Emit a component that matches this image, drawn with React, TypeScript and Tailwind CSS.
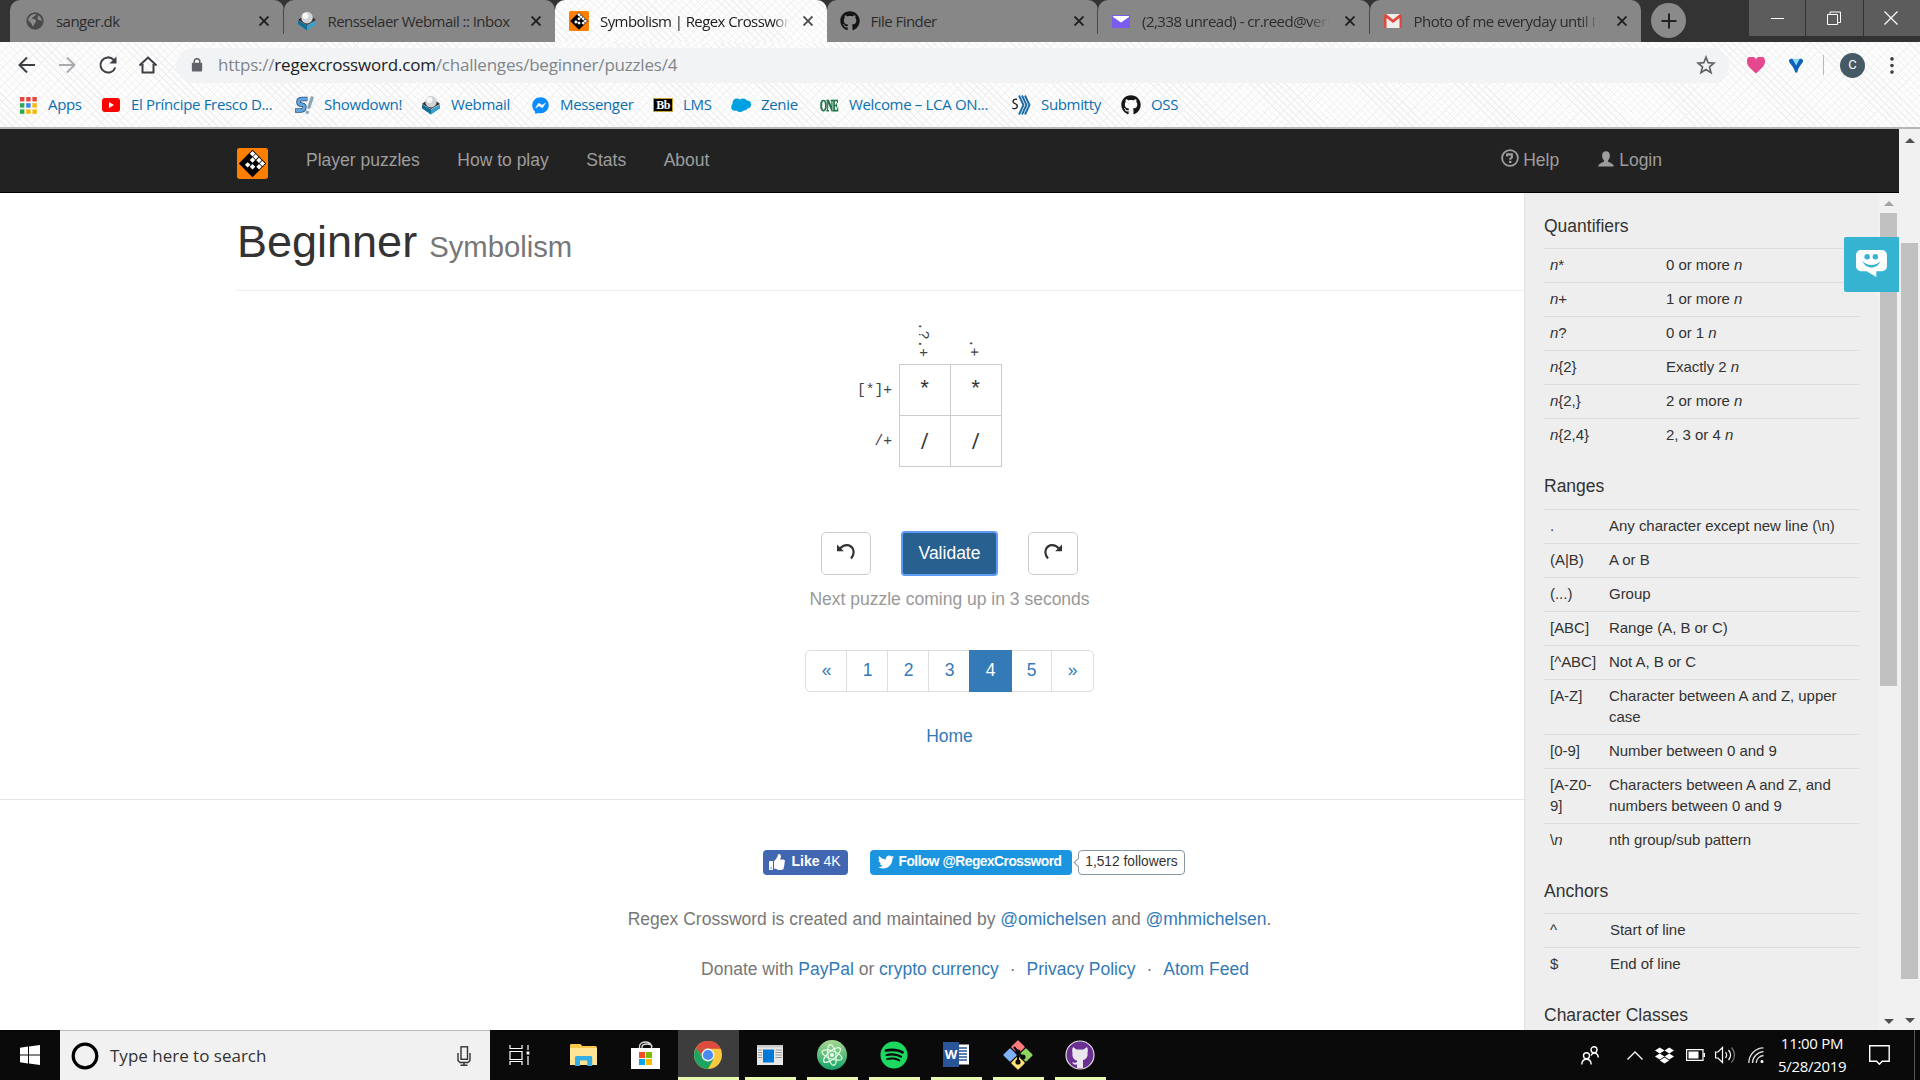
import React from "react";
import { FaGithub, FaSpotify, FaDropbox, FaTwitter, FaFacebookMessenger, FaThumbsUp } from "react-icons/fa";

const HATCH =
  "bg-[#fdfdfd] bg-[repeating-linear-gradient(45deg,transparent_0_4px,#f0f0f0_4px_5px),repeating-linear-gradient(-45deg,transparent_0_5px,#f4f4f4_5px_6px)]";

function Globe() {
  return (
    <svg viewBox="0 0 20 20" className="size-[18px]">
      <circle cx="10" cy="10" r="9.6" fill="#4a4a4a" />
      <path d="M10 2.2c2 .2 1 2-.8 2.300-.4 1.500-2.700 1-2.500 3 2-.4 4.300.6 4.600 2.300.3 1.300-1.800 2.400-2.200 4.200-.3 1.600-1.300 2.600-2 1.300C6.500 13 4.600 11 2.400 9.500 2.600 5.500 6 2.300 10 2.200z" fill="#8a8a8a" />
      <path d="M13 3.500c2.600 1 4.600 3.600 4.700 6.500-1.200-1.200-3.600-.6-4.600-1.800-.9-1.200.5-2-.1-4.700z" fill="#8a8a8a" />
    </svg>
  );
}

function Roundcube() {
  return (
    <svg viewBox="0 0 20 20" className="size-[20px]">
      <path d="M1 9 L6 5 H14 L19 9 L10 14z" fill="#333" />
      <circle cx="10" cy="6.600" r="5.800" fill="#cfd3d6" />
      <circle cx="8.500" cy="5" r="3" fill="#f6f7f8" />
      <path d="M1 9.500 L10 14.500 L19 9.500 V13.500 L10 19.500 L1 13.500z" fill="#3aa0c9" />
      <path d="M1 13 L10 19.500 V14.500 L1 9.500z" fill="#156c97" />
    </svg>
  );
}

function RegexLogo({ className }: { className: string }) {
  return (
    <svg viewBox="0 0 32 32" className={className}>
      <rect width="32" height="32" rx="2.500" fill="#ff8000" />
      <g transform="translate(16 16) rotate(45)">
        <rect x="-10" y="-10" width="20" height="20" fill="#000" />
        <g fill="#fff">
          <rect x="-9.200" y="-9.200" width="4" height="4" />
          <rect x="-4.500" y="-9.200" width="4" height="4" />
          <rect x=".3" y="-9.200" width="4" height="4" />
          <rect x="5.100" y="-9.200" width="4" height="4" />
          <rect x="5.100" y="-4.500" width="4" height="4" />
          <rect x="-4.500" y="-4.500" width="4" height="4" />
          <rect x=".3" y=".3" width="4" height="4" />
          <rect x="-4.500" y="2.500" width="4" height="4" />
        </g>
      </g>
    </svg>
  );
}

function YahooMail() {
  return (
    <svg viewBox="0 0 18 13" className="h-[13px] w-[18px]">
      <rect width="18" height="13" rx="1" fill="#7a5cf0" />
      <path d="M1 1h16v1L9 7.500 1 2z" fill="#fff" />
    </svg>
  );
}

function Gmail() {
  return (
    <svg viewBox="0 0 18 14" className="h-[14px] w-[18px]">
      <rect width="18" height="14" rx="1.200" fill="#eee" />
      <path d="M0 1.200C0 .5.500 0 1.200 0H2l7 5.500L16 0h.8c.7 0 1.200.5 1.200 1.200V13c0 .6-.4 1-1 1h-1.500V4L9 9 2.500 4v10H1c-.6 0-1-.4-1-1z" fill="#dd4b3e" />
    </svg>
  );
}

function Close({ dark = true }: { dark?: boolean }) {
  return (
    <svg viewBox="0 0 10 10" className="size-[10px] shrink-0">
      <path d="M.5.5l9 9M9.500.5l-9 9" stroke={dark ? "#1f1f1f" : "#4a4d50"} strokeWidth="1.900" />
    </svg>
  );
}

const TABS = [
  { icon: <Globe />, title: "sanger.dk" },
  { icon: <Roundcube />, title: "Rensselaer Webmail :: Inbox" },
  { icon: <RegexLogo className="size-5" />, title: "Symbolism | Regex Crossword", active: true },
  { icon: <FaGithub className="size-5 text-[#151515]" />, title: "File Finder" },
  { icon: <YahooMail />, title: "(2,338 unread) - cr.reed@veri" },
  { icon: <Gmail />, title: "Photo of me everyday until I d" },
];

function TabStrip() {
  return (
    <div className="flex h-[42px] shrink-0 bg-[#333]">
      <div className="flex pl-[10px]">
        {TABS.map((t, i) => (
          <div
            key={i}
            className={
              t.active
                ? `flex h-[42px] w-[271.500px] items-center rounded-t-[10px] pl-[14px] ${HATCH}`
                : i === 0
                  ? "flex h-[42px] w-[273.500px] items-center rounded-t-[10px] bg-[#878787] pl-[15px]"
                  : "flex h-[42px] w-[271.500px] items-center rounded-t-[10px] bg-[#878787] pl-[13px]"
            }
          >
            <div className="flex w-5 justify-center">{t.icon}</div>
            <div
              className={
                t.active
                  ? "ml-[11px] w-[189px] overflow-hidden whitespace-nowrap text-[15px] tracking-[-0.038em] text-[#202020] [mask-image:linear-gradient(90deg,#000_92%,transparent)]"
                  : i > 3
                    ? "ml-[11px] w-[189px] overflow-hidden whitespace-nowrap text-[15px] tracking-[-0.034em] text-[#2c2c2c] [mask-image:linear-gradient(90deg,#000_88%,transparent_99%)]"
                    : "ml-[11px] w-[189px] overflow-hidden whitespace-nowrap text-[15px] tracking-[-0.036em] text-[#2c2c2c]"
              }
            >
              {t.title}
            </div>
            <div className="ml-[14px] flex flex-1">
              <Close dark={!t.active} />
            </div>
            <div className={i === 0 || i === 3 || i === 4 ? "h-[25px] w-px bg-[#4a4a4a]" : "w-px"} />
          </div>
        ))}
      </div>
      <div className="ml-[10px] mt-[3px] flex size-[35px] items-center justify-center rounded-full bg-[#8a8a8a]">
        <svg viewBox="0 0 16 16" className="size-4">
          <path d="M8 .5v15M.5 8h15" stroke="#222" strokeWidth="2" />
        </svg>
      </div>
      <div className="ml-auto flex h-[36px] gap-px text-white">
        <div className="flex w-[56px] items-center justify-center bg-[#5c5c5c]">
          <div className="h-px w-[13px] bg-white" />
        </div>
        <div className="flex w-[57px] items-center justify-center bg-[#5c5c5c]">
          <svg viewBox="0 0 14 14" className="mr-[2px] size-[14px]" fill="none" stroke="#fff">
            <path d="M.5 3.500h10v10H.5zM3 3.500V1h10.500v10.500H11" />
          </svg>
        </div>
        <div className="flex w-[56px] items-center justify-center bg-[#5c5c5c]">
          <svg viewBox="0 0 14 14" className="mr-[2px] size-[14px]" stroke="#fff" strokeWidth="1.200">
            <path d="M.5.5l13 13M13.500.5l-13 13" />
          </svg>
        </div>
      </div>
    </div>
  );
}

function Toolbar() {
  return (
    <div className="flex h-[46px] items-center pl-[17px]">
      <div className="flex w-[159px] items-center">
        <svg viewBox="0 0 20 20" className="size-5" fill="none" stroke="#3c3f43" strokeWidth="2">
          <path d="M18 10H3M10 2.500L2.500 10l7.500 7.500" />
        </svg>
        <svg viewBox="0 0 20 20" className="ml-5 size-5" fill="none" stroke="#a9abae" strokeWidth="2">
          <path d="M2 10h15M10 2.500l7.500 7.500-7.500 7.500" />
        </svg>
        <svg viewBox="0 0 20 20" className="ml-[21px] size-5" fill="none" stroke="#3c3f43" strokeWidth="2">
          <path d="M17.300 12.500A7.600 7.600 0 1 1 15.500 4.600L17 6.200" />
          <path d="M18.500 1.500v7h-7z" fill="#3c3f43" stroke="none" />
        </svg>
        <svg viewBox="0 0 20 20" className="ml-5 size-5" fill="none" stroke="#3c3f43" strokeWidth="2">
          <path d="M1.500 10.500L10 2.500l8.500 8M4.500 9v8.500h11V9" />
        </svg>
      </div>
      <div className="flex h-[35px] w-[1553px] items-center rounded-full bg-[#f1f3f4] pl-[15px] pr-[13px]">
        <svg viewBox="0 0 12 15" className="h-[14px] w-[12px]">
          <rect x=".5" y="5" width="11" height="9.500" rx="1" fill="#5f6368" />
          <path d="M3 6V3.800a3 3 0 0 1 6 0V6" fill="none" stroke="#5f6368" strokeWidth="1.600" />
        </svg>
        <div className="ml-[15px] text-[17px] tracking-[-0.012em] text-[#80868b]">
          https://<span className="text-[#202124]">regexcrossword.com</span>/challenges/beginner/puzzles/4
        </div>
        <svg viewBox="0 0 20 20" className="ml-auto size-5" fill="none" stroke="#5f6368" strokeWidth="1.700">
          <path d="M10 2.200l2.200 5.500 5.800.4-4.500 3.800 1.500 5.800-5-3.200-5 3.200 1.500-5.800L2 8.100l5.800-.4z" />
        </svg>
      </div>
      <svg viewBox="0 0 20 18" className="ml-[17px] h-[17px] w-5">
        <path d="M10 17.500C4 12 .5 9 .5 5.200A4.800 4.800 0 0 1 10 3a4.800 4.800 0 0 1 9.500 2.200C19.500 9 16 12 10 17.500z" fill="#e5488f" />
      </svg>
      <svg viewBox="0 0 18 18" className="ml-[22px] h-[17px] w-[16px]">
        <path d="M1 3.500C2 .5 6 1 6.500 3l2.500 4 2.500-4c.5-2 4.500-2.500 5.500.5C17 7 11.500 10 10.500 17H8C7 10 1 7 1 3.500z" fill="#0c63b8" />
        <path d="M5 1.500c2.500 0 5.500 0 8 0L9.200 9z" fill="#8fd8fb" />
      </svg>
      <div className="ml-[19px] h-5 w-px bg-[#b9b9b9]" />
      <div className="ml-[16px] flex size-[25px] items-center justify-center rounded-full bg-[#455a64] font-['Roboto'] text-[13px] text-white">C</div>
      <svg viewBox="0 0 4 18" className="ml-[25px] h-[17px] w-1" fill="#3c3f43">
        <circle cx="2" cy="2" r="1.900" />
        <circle cx="2" cy="9" r="1.900" />
        <circle cx="2" cy="16" r="1.900" />
      </svg>
    </div>
  );
}

function AppsIcon() {
  const c = ["#e8453c", "#e8453c", "#e8453c", "#2da94f", "#3b82f0", "#f6b704", "#2da94f", "#f6b704", "#f6b704"];
  return (
    <svg viewBox="0 0 17 17" className="size-[17px]">
      {c.map((f, i) => (
        <rect key={i} x={(i % 3) * 6.2} y={Math.floor(i / 3) * 6.2} width="4.400" height="4.400" fill={f} />
      ))}
    </svg>
  );
}

const BOOKMARKS = [
  { w: "w-[83px]", label: "Apps", icon: <AppsIcon /> },
  {
    w: "w-[193px]",
    label: "El Príncipe Fresco D...",
    icon: (
      <svg viewBox="0 0 18 14" className="h-[14px] w-[18px] shrink-0">
        <rect width="18" height="14" rx="3" fill="#f00" />
        <path d="M7 4l5 3-5 3z" fill="#fff" />
      </svg>
    ),
  },
  {
    w: "w-[127px]",
    label: "Showdown!",
    icon: (
      <svg viewBox="0 0 20 20" className="size-[20px]" fill="none">
        <path d="M13.500 4H8.500c-2.400 0-4 1-4 3s1.500 2.700 3.500 2.800 2.700 1 2.300 3-2 2.700-4 2.700H1" stroke="#2b4d78" strokeWidth="4.600" />
        <path d="M13 4H8.500c-2.400 0-4 1-4 3s1.500 2.700 3.500 2.800 2.700 1 2.300 3-2 2.700-4 2.700H1.500" stroke="#62a5dc" strokeWidth="3" />
        <path d="M18.500 1.500l-4 12M13.600 16l-.8 2.800" stroke="#8aa6bd" strokeWidth="3.200" />
      </svg>
    ),
  },
  { w: "w-[109px]", label: "Webmail", icon: <Roundcube /> },
  { w: "w-[123px]", label: "Messenger", icon: <FaFacebookMessenger className="size-[17px] text-[#0a8dff]" /> },
  {
    w: "w-[78px]",
    label: "LMS",
    icon: (
      <div className="flex h-[14px] w-5 items-center justify-center border border-[#c9a23a] bg-black font-['Liberation_Serif'] text-[12px] font-bold leading-none tracking-tighter text-white">
        Bb
      </div>
    ),
  },
  {
    w: "w-[88px]",
    label: "Zenie",
    icon: (
      <svg viewBox="0 0 20 14" className="h-[14px] w-5 shrink-0" fill="#00a1e0">
        <circle cx="6" cy="5" r="4.500" />
        <circle cx="12" cy="4.500" r="4" />
        <circle cx="16" cy="6.500" r="4" />
        <circle cx="4" cy="9" r="3.800" />
        <circle cx="9" cy="10" r="4" />
        <circle cx="13" cy="9" r="3.500" />
      </svg>
    ),
  },
  {
    w: "w-[192px]",
    label: "Welcome – LCA ON...",
    icon: (
      <div className="origin-center scale-x-[0.700] scale-y-125 whitespace-nowrap font-['Liberation_Serif'] text-[13px] font-bold leading-none tracking-[-0.060em] text-[#1d7145] [-webkit-text-stroke:0.600px_#1d7145]">
        ONE
      </div>
    ),
  },
  {
    w: "w-[110px]",
    label: "Submitty",
    icon: (
      <svg viewBox="0 0 20 20" className="size-5" fill="none">
        <path d="M6 4.500C4 3.500 1.500 5 2.300 7.200c.7 1.600 3.700 1.300 4 3.600.3 2.600-3 3.600-5 2.200" stroke="#222" strokeWidth="1.400" />
        <path d="M8 .5L12.500 10 8 19.500M11 .5L15.500 10 11 19.500M14 .5L18.500 10 14 19.500" stroke="#1b6ba5" strokeWidth="1.900" />
      </svg>
    ),
  },
  { w: "w-[80px]", label: "OSS", icon: <FaGithub className="size-5 text-[#151515]" /> },
];

function Bookmarks() {
  return (
    <div className="flex h-[34px] items-center pl-[18px]">
      {BOOKMARKS.map((b) => (
        <div key={b.label} className={`flex items-center ${b.w}`}>
          <div className="flex w-5 shrink-0 items-center justify-center">{b.icon}</div>
          <div className="mb-[2px] ml-[10px] whitespace-nowrap text-[15px] tracking-[-0.022em] text-[#0b6fb3]">{b.label}</div>
        </div>
      ))}
    </div>
  );
}

function Navbar() {
  return (
    <div className="flex h-[64px] shrink-0 items-start border-b border-black bg-[#222] pl-[237px] text-[17.500px] leading-[25px] text-[#9d9d9d]">
      <RegexLogo className="mt-[19px] size-[31px]" />
      <div className="mt-[19px] flex gap-[37.500px] pl-[38px]">
        <span>Player puzzles</span>
        <span>How to play</span>
        <span>Stats</span>
        <span>About</span>
      </div>
      <div className="ml-auto mr-[237px] mt-[19px] flex">
        <svg viewBox="0 0 18 18" className="mr-[4px] mt-px size-[18px]" fill="none">
          <circle cx="9" cy="9" r="7.900" stroke="#9d9d9d" strokeWidth="1.800" />
          <path d="M6.200 7.500V5.300h4.600v3.200L9.300 9.700v1" stroke="#9d9d9d" strokeWidth="2.200" />
          <rect x="8" y="11.800" width="2.400" height="2.200" fill="#9d9d9d" />
        </svg>
        <span>Help</span>
        <svg viewBox="0 0 16 16" className="ml-[39px] mr-[5px] mt-[3px] size-[16px]" fill="#9d9d9d">
          <path d="M8 .3c2.500 0 3.900 1.700 3.900 4.200 0 2-.7 3.800-1.800 4.800v1.200c0 .9 5.700 1.700 5.700 5H.2c0-3.300 5.700-4.100 5.700-5V9.300C4.800 8.300 4.100 6.500 4.100 4.500 4.100 2 5.500.3 8 .3z" />
        </svg>
        <span>Login</span>
      </div>
    </div>
  );
}

function HistoryIcon({ flip = false }: { flip?: boolean }) {
  return (
    <svg viewBox="0 0 20 17" className={flip ? "h-[17px] w-5 -scale-x-100" : "h-[17px] w-5"} fill="none">
      <path d="M4 5.500C8 .8 14.500 1 17 6c1.200 3.500.3 7-2 9.500" stroke="#333" strokeWidth="2.200" />
      <path d="M1 1.500v6.700h6.800z" fill="#333" />
    </svg>
  );
}

const GRID = ["*", "*", "/", "/"];

function Puzzle() {
  return (
    <div className="flex flex-col items-center">
      <div className="flex font-['Liberation_Mono'] text-[#333]">
        <div className="mr-[7px] mt-[44px] w-[42px] text-right text-[14.600px] text-[#444]">
          <div className="flex h-[51px] items-center justify-end pt-[2px]">[*]+</div>
          <div className="flex h-[51px] items-center justify-end pt-[2px]">/+</div>
        </div>
        <div>
          <div className="flex h-[44px] text-[14.600px] text-[#444]">
            {[".?.+", ".+"].map((c) => (
              <div key={c} className="flex w-[51px] items-center justify-end pb-[7px] pr-[4px] [writing-mode:vertical-rl]">
                <span className="leading-[18px]">{c}</span>
              </div>
            ))}
          </div>
          <div className="grid w-[103px] grid-cols-[51px_51px] border-l border-t border-[#ccc]">
            {GRID.map((c, i) => (
              <div
                key={i}
                className={
                  c === "/"
                    ? "flex h-[51px] items-center justify-center border-b border-r border-[#ccc] pr-px font-['Open_Sans'] text-[21px] leading-none"
                    : "flex h-[51px] items-center justify-center border-b border-r border-[#ccc] pr-px pt-[2px] text-[22px] leading-none"
                }
              >
                {c}
              </div>
            ))}
          </div>
        </div>
        <div className="w-[47px]" />
      </div>
      <div className="mt-[64px] flex items-center">
        <div className="flex h-[43px] w-[50px] justify-center rounded-[5px] border border-[#ccc] pt-[10px]">
          <HistoryIcon />
        </div>
        <div className="mx-[30px] flex h-[45px] w-[97px] items-center justify-center rounded-[4px] border-2 border-[#5e9bf2] bg-[#286090] text-[17.500px] text-white">
          Validate
        </div>
        <div className="flex h-[43px] w-[50px] justify-center rounded-[5px] border border-[#ccc] pt-[10px]">
          <HistoryIcon flip />
        </div>
      </div>
      <div className="mt-[11px] text-[17.500px] leading-[25px] text-[#999]">Next puzzle coming up in 3 seconds</div>
      <div className="mt-[38px] flex h-[42px] rounded-[5px] border border-[#ddd] text-[17.500px] text-[#337ab7]">
        {["«", "1", "2", "3", "4", "5", "»"].map((p) => (
          <div
            key={p}
            className={
              p === "4"
                ? "-my-px flex w-[43px] items-center justify-center bg-[#337ab7] pb-[2px] text-white"
                : p === "3"
                  ? "flex w-[40px] items-center justify-center pb-[2px] pl-px"
                  : p === "»"
                    ? "flex w-[41px] items-center justify-center pb-[2px]"
                    : p === "5"
                      ? "flex w-[40px] items-center justify-center border-r border-[#ddd] pb-[2px]"
                      : "flex w-[41px] items-center justify-center border-r border-[#ddd] pb-[2px] pl-px"
            }
          >
            {p}
          </div>
        ))}
      </div>
      <div className="mt-[32px] text-[17.500px] leading-[25px] text-[#337ab7]">Home</div>
    </div>
  );
}

function Footer() {
  return (
    <div className="flex w-[1899px] flex-col items-center text-[17.500px] leading-[25px] text-[#777]">
      <div className="ml-[48px] mt-[50px] flex h-[25px] items-stretch text-[14px] text-white">
        <div className="flex w-[85px] items-center rounded-[4px] bg-[#4267b2] pb-[2px] pl-[6px] text-[14px]">
          <FaThumbsUp className="size-[16px]" />
          <b className="ml-[7px]">Like</b>
          <span className="ml-[4px]">4K</span>
        </div>
        <div className="ml-[22px] flex w-[202px] items-center whitespace-nowrap rounded-[4px] bg-[#1b95e0] pb-[2px] pl-[8px] text-[13.750px]">
          <FaTwitter className="mr-[5px] size-[16px]" />
          <span className="font-bold tracking-[-0.036em]">Follow @RegexCrossword</span>
        </div>
        <div className="relative ml-[6px] flex w-[107px] items-center justify-center rounded-[4px] border border-[#8799a6] pb-[2px] pl-px text-[13.750px] text-[#333]">
          1,512 followers
          <div className="absolute -left-[4px] top-[8px] size-[7px] rotate-45 border-b border-l border-[#8799a6] bg-white" />
        </div>
      </div>
      <div className="mt-[32px]">
        Regex Crossword is created and maintained by <span className="text-[#337ab7]">@omichelsen</span> and{" "}
        <span className="text-[#337ab7]">@mhmichelsen</span>.
      </div>
      <div className="ml-[51px] mt-[25px]">
        Donate with <span className="text-[#337ab7]">PayPal</span> or <span className="text-[#337ab7]">crypto currency</span>
        <span className="mx-[11px]">·</span>
        <span className="text-[#337ab7]">Privacy Policy</span>
        <span className="mx-[11px]">·</span>
        <span className="text-[#337ab7]">Atom Feed</span>
      </div>
    </div>
  );
}

const N = <i>n</i>;

type Row = [React.ReactNode, React.ReactNode];
const QUANT: Row[] = [
  [<>{N}*</>, <>0 or more {N}</>],
  [<>{N}+</>, <>1 or more {N}</>],
  [<>{N}?</>, <>0 or 1 {N}</>],
  [<>{N}{"{2}"}</>, <>Exactly 2 {N}</>],
  [<>{N}{"{2,}"}</>, <>2 or more {N}</>],
  [<>{N}{"{2,4}"}</>, <>2, 3 or 4 {N}</>],
];
const RANGES: Row[] = [
  [".", "Any character except new line (\\n)"],
  ["(A|B)", "A or B"],
  ["(...)", "Group"],
  ["[ABC]", "Range (A, B or C)"],
  ["[^ABC]", "Not A, B or C"],
  ["[A-Z]", <>Character between A and Z, upper<br />case</>],
  ["[0-9]", "Number between 0 and 9"],
  [<>[A-Z0-<br />9]</>, <>Characters between A and Z, and<br />numbers between 0 and 9</>],
  [<>\{N}</>, "nth group/sub pattern"],
];
const ANCHORS: Row[] = [
  ["^", "Start of line"],
  ["$", "End of line"],
];

function Table({ rows, col }: { rows: Row[]; col: string }) {
  return (
    <div className="w-[315px] text-[15px] leading-[21px] tracking-[-0.002em]">
      {rows.map((r, i) => (
        <div key={i} className="flex border-t border-[#ddd] pb-[7px] pl-[6px] pt-[5px]">
          <div className={`shrink-0 ${col}`}>{r[0]}</div>
          <div className="whitespace-nowrap">{r[1]}</div>
        </div>
      ))}
    </div>
  );
}

function Arrow({ down = false, color = "#505050" }: { down?: boolean; color?: string }) {
  return (
    <svg viewBox="0 0 10 5" className={down ? "h-[5px] w-[10px] rotate-180" : "h-[5px] w-[10px]"}>
      <path d="M5 0l5 5H0z" fill={color} />
    </svg>
  );
}

function Sidebar() {
  return (
    <div className="relative flex h-[837px] w-[375px] shrink-0 overflow-hidden border-l border-[#e0e0e0] bg-[#eee] text-[#333]">
      <div className="w-[353px] shrink-0 pl-[19px] text-[17.500px] leading-[20px]">
        <div className="mb-[12px] mt-[23px]">Quantifiers</div>
        <Table rows={QUANT} col="w-[116px]" />
        <div className="mb-[13px] mt-[24px]">Ranges</div>
        <Table rows={RANGES} col="w-[59px]" />
        <div className="mb-[12px] mt-[24px]">Anchors</div>
        <Table rows={ANCHORS} col="w-[60px]" />
        <div className="mt-[24px]">Character Classes</div>
      </div>
      <div className="flex w-[21px] flex-col items-center bg-[#f1f1f1]">
        <div className="flex h-[20px] items-center">
          <Arrow color="#a3a3a3" />
        </div>
        <div className="h-[473px] w-[17px] bg-[#c1c1c1]" />
        <div className="mb-[6px] mt-auto">
          <Arrow down />
        </div>
      </div>
      <div className="absolute right-0 top-[44px] flex size-[55px] justify-center rounded-l-[2px] bg-[#37b3d2] pt-[13px]">
        <svg viewBox="0 0 32 28" className="h-[27px] w-[31px]">
          <path d="M5 0h22a5 5 0 0 1 5 5v12a5 5 0 0 1-5 5h-6v6l-10-6H5a5 5 0 0 1-5-5V5a5 5 0 0 1 5-5z" fill="#fff" />
          <circle cx="11.500" cy="7" r="2.900" fill="#37b3d2" />
          <circle cx="20" cy="7" r="2.900" fill="#37b3d2" />
          <path d="M6.500 11.500c5 5.500 14 5.500 19 0-3.500 9-15.500 9-19 0z" fill="#37b3d2" />
        </svg>
      </div>
    </div>
  );
}

function Chrome() {
  return (
    <svg viewBox="-14 -14 28 28" className="size-[28px]">
      <circle r="14" fill="#fbc940" />
      <path d="M-12.100-7A14 14 0 0 0 0 14L5.500 4-5.500 4z" fill="#1da462" />
      <path d="M-12.100-7A14 14 0 0 1 12.700-6.200H0z" fill="#dd4b3e" />
      <path d="M-12.100-7L-5.500 4 0-6.200z" fill="#1da462" />
      <path d="M-12.100-7L-6 0 0-6.200z" fill="#dd4b3e" />
      <circle r="6.400" fill="#f2f2f2" />
      <circle r="5.100" fill="#4a8af4" />
    </svg>
  );
}

const TASKS = [
  { icon: <Chrome /> },
  {
    icon: (
      <svg viewBox="0 0 26 20" className="h-[20px] w-[26px]">
        <rect width="26" height="20" fill="#e8e8e8" />
        <rect width="26" height="2.500" fill="#c9c9c9" />
        <rect x="6" y="4.500" width="11" height="13" fill="#0078d7" />
        <path d="M1 5h4M1 7.500h4M1 10h4M1 12.500h4M18.500 5H25M18.500 7.500H25M18.500 10H25M18.500 12.500H25" stroke="#999" />
      </svg>
    ),
  },
  {
    icon: (
      <svg viewBox="-15 -15 30 30" className="size-[30px]" fill="none" stroke="#e8fbe8" strokeWidth="1.200">
        <defs>
          <linearGradient id="atomFill" x1="0" y1="0" x2="0" y2="1">
            <stop offset="0" stopColor="#a9d890" />
            <stop offset="1" stopColor="#12a36a" />
          </linearGradient>
        </defs>
        <circle r="15" fill="url(#atomFill)" stroke="none" />
        <ellipse rx="10.500" ry="4" transform="rotate(20)" />
        <ellipse rx="10.500" ry="4" transform="rotate(80)" />
        <ellipse rx="10.500" ry="4" transform="rotate(140)" />
        <circle r="1.500" fill="#fff" />
      </svg>
    ),
  },
  {
    icon: <FaSpotify className="size-[28px] text-[#1ed760]" />,
  },
  {
    icon: (
      <div className="flex items-center">
        <div className="z-10 flex h-[25px] w-[16px] items-center justify-center bg-[#2a5699] text-[13px] font-bold text-white">W</div>
        <svg viewBox="0 0 10 20" className="h-[21px] w-[10px]">
          <rect width="10" height="20" fill="#fff" />
          <path d="M0 3.500h8M0 6.500h8M0 9.500h8M0 12.500h8M0 15.500h8" stroke="#2a5699" strokeWidth="1.300" />
        </svg>
      </div>
    ),
  },
  {
    icon: (
      <svg viewBox="-15 -15 30 30" className="size-[30px]">
        <g transform="rotate(45)">
          <rect x="-10.600" y="-10.600" width="10" height="10" rx="1" fill="#ff7b7b" />
          <rect x=".6" y="-10.600" width="10" height="10" rx="1" fill="#8fd45e" />
          <rect x="-10.600" y=".6" width="10" height="10" rx="1" fill="#7fb0f8" />
          <rect x=".6" y=".6" width="10" height="10" rx="1" fill="#ffe27a" />
        </g>
        <path d="M-4-8L0-3v11M0-2l5 4" stroke="#0a0a0a" strokeWidth="2.200" fill="none" />
        <circle cy="-3" r="2.600" fill="#0a0a0a" />
        <circle cy="7" r="2.600" fill="#0a0a0a" />
        <circle cx="5" cy="2" r="2.600" fill="#0a0a0a" />
      </svg>
    ),
  },
  {
    icon: (
      <svg viewBox="-15 -15 30 30" className="size-[30px]">
        <circle r="14" fill="#6b2f92" stroke="#ddd" strokeWidth="1.200" />
        <path d="M-7-8l3.500 2.500h7L7-8c1 2 1 4 .5 6 .6 4-1.500 6.500-4.500 7V13h-6V9.500c-3 .5-4-.5-5-2.500 2 1 3 1.200 5 0v-1.500C-6 5-8.200 2-7.500-2-8-4-8-6-7-8z" fill="#e9e6ee" />
      </svg>
    ),
  },
];

function Taskbar() {
  return (
    <div className="flex h-[50px] shrink-0 items-center bg-[#0a0a0a] text-white">
      <div className="flex w-[60px] justify-center">
        <svg viewBox="0 0 20 20" className="size-5" fill="#fff">
          <path d="M0 2.800L8 1.600V9.500H0zM9 1.500L20 0V9.500H9zM0 10.500h8v8L0 17.300zM9 10.500h11V20L9 18.500z" />
        </svg>
      </div>
      <div className="flex h-[50px] w-[430px] items-center border-t border-[#bbb] bg-[#f1f1f1] pl-[11px]">
        <svg viewBox="0 0 28 28" className="size-[28px]" fill="none">
          <circle cx="14" cy="14" r="11.800" stroke="#000" strokeWidth="3.200" />
        </svg>
        <div className="ml-[11px] text-[17px] text-[#333]">Type here to search</div>
        <svg viewBox="0 0 14 20" className="ml-auto mr-[19px] h-[20px] w-[14px]" fill="none" stroke="#333" strokeWidth="1.400">
          <rect x="4" y=".8" width="6.500" height="12.500" />
          <path d="M1 7v7.500l2 2h8l2-2V7M7 16.500v3M3.500 19.300h7" />
        </svg>
      </div>
      <svg viewBox="0 0 21 20" className="ml-[19px] h-[20px] w-[21px]" fill="none" stroke="#fff" strokeWidth="1.200">
        <path d="M1 0v3.500h12V0M1 6.500h12v8H1zM1 20v-3.500h12V20M19 0v5M19 11v9" />
        <rect x="17.600" y="6.500" width="2.800" height="3" fill="#fff" stroke="none" />
      </svg>
      <svg viewBox="0 0 27 22" className="ml-[40px] h-[22px] w-[27px]">
        <path d="M0 1.500C0 .7.500 0 1.300 0h9l2 2H25.500c.8 0 1.300.6 1.300 1.300V21H0z" fill="#f7c64a" />
        <path d="M0 4h27v17H0z" fill="#ffe495" />
        <path d="M5 22v-8.500c0-1 .7-1.600 1.600-1.600h14c.9 0 1.600.6 1.600 1.600V22h-5v-5.500H10V22z" fill="#37aee3" />
      </svg>
      <svg viewBox="0 0 29 28" className="ml-[34px] h-[28px] w-[29px]">
        <path d="M8.500 9V5.500c0-6 12-6 12 0V9M11 9V6c0-4 10-4 10 0" fill="none" stroke="#ddd" strokeWidth="1.300" />
        <path d="M0 7h29v21H0z" fill="#fff" />
        <path d="M8 11h6v6H8z" fill="#f25022" />
        <path d="M15 11h6v6h-6z" fill="#7fba00" />
        <path d="M8 18h6v6H8z" fill="#00a4ef" />
        <path d="M15 18h6v6h-6z" fill="#ffb900" />
      </svg>
      <div className="ml-[18px] flex">
        {TASKS.map((t, i) => (
          <div
            key={i}
            className={
              i === 0
                ? "mr-[6px] flex h-[50px] w-[61px] flex-col items-center justify-between bg-[#3d3d3d]"
                : "mr-[11px] flex h-[50px] w-[51px] flex-col items-center justify-between"
            }
          >
            <div className="flex w-full flex-1 items-center justify-center pr-px pt-[2px]">{t.icon}</div>
            <div className="h-[3px] w-full shrink-0 bg-[#e9f8b0]" />
          </div>
        ))}
      </div>
      <div className="ml-auto flex items-center">
        <svg viewBox="0 0 18 19" className="h-[19px] w-[18px]" fill="none" stroke="#fff" strokeWidth="1.400">
          <circle cx="13" cy="3.800" r="3" />
          <circle cx="5.500" cy="9.800" r="3" />
          <path d="M.8 18.500c.3-7 9.100-7 9.400 0M10 9.500c2-4 7-3 7.300 2" />
        </svg>
        <svg viewBox="0 0 16 9" className="ml-[28px] h-[9px] w-4" fill="none" stroke="#fff" strokeWidth="1.300">
          <path d="M.5 8.500L8 1l7.500 7.500" />
        </svg>
        <FaDropbox className="ml-[12px] size-[19px]" />
        <svg viewBox="0 0 19 12" className="ml-[12px] h-[12px] w-[19px]" fill="none" stroke="#fff" strokeWidth="1.200">
          <path d="M.6.6h16.400v10.800H.6zM18.400 4v4" />
          <rect x="2.500" y="2.500" width="10" height="7" fill="#fff" stroke="none" />
        </svg>
        <svg viewBox="0 0 21 18" className="ml-[10px] h-[18px] w-[21px]" fill="none" stroke="#fff" strokeWidth="1.200">
          <path d="M.6 6v6H3l4.500 4.500v-15L3 6z" />
          <path d="M10.500 6c1.500 2 1.500 4 0 6M13.500 4c2.500 3 2.500 7 0 10" />
          <path d="M16.500 1.500c4 4.500 4 10.500 0 15" stroke="#777" />
        </svg>
        <svg viewBox="0 0 16 16" className="ml-[12px] h-[16px] w-[16px]" fill="none" stroke="#ddd" strokeWidth="1.300">
          <path d="M.8 16C.8 8 7 1 15.500.8M4.500 16c0-6 5-11 11-11.300M8.200 16c0-4 3.300-7.200 7.300-7.500" />
          <circle cx="14" cy="14.500" r="1.500" fill="#fff" stroke="none" />
        </svg>
        <div className="ml-[14px] w-[68px] text-center text-[15px] leading-[23px] tracking-[-0.020em]">
          <div>11:00 PM</div>
          <div>5/28/2019</div>
        </div>
        <svg viewBox="0 0 21 20" className="ml-[23px] h-[20px] w-[21px]" fill="none" stroke="#fff" strokeWidth="1.400">
          <path d="M.7.700h19.500v15.500h-7l-2.800 3-2.800-3H.7z" />
        </svg>
        <div className="ml-[24px] mr-[5px] h-[50px] w-px bg-[#555]" />
      </div>
    </div>
  );
}

export default function App() {
  return (
    <div className="flex h-[1080px] w-[1920px] flex-col overflow-hidden bg-white font-['Open_Sans',sans-serif]">
      <TabStrip />
      <div className={`h-[87px] shrink-0 border-b-2 border-[#b6b6b6] ${HATCH}`}>
        <Toolbar />
        <Bookmarks />
      </div>
      <div className="flex h-[901px] shrink-0 font-['Liberation_Sans',Arial,sans-serif]">
        <div className="flex w-[1899px] flex-col">
          <Navbar />
          <div className="flex">
            <div className="w-[1524px] shrink-0">
              <div className="ml-[237px] flex h-[98px] items-baseline border-b border-[#eee] pt-[24px] text-[45px] leading-[50px] text-[#333]">
                Beginner<span className="ml-[12px] text-[29.250px] text-[#777]">Symbolism</span>
              </div>
              <div className="mt-[29px] flex w-[1899px] flex-col items-center">
                <Puzzle />
              </div>
              <div className="mt-[50px] h-px bg-[#e5e5e5]" />
              <Footer />
            </div>
            <div className="z-10">
              <Sidebar />
            </div>
          </div>
        </div>
        <div className="flex w-[21px] flex-col items-center bg-[#f1f1f1]">
          <div className="mt-[9px]">
            <Arrow />
          </div>
          <div className="mt-[100px] h-[736px] w-[17px] bg-[#c1c1c1]" />
          <div className="mb-[7px] mt-auto">
            <Arrow down />
          </div>
        </div>
      </div>
      <Taskbar />
    </div>
  );
}
